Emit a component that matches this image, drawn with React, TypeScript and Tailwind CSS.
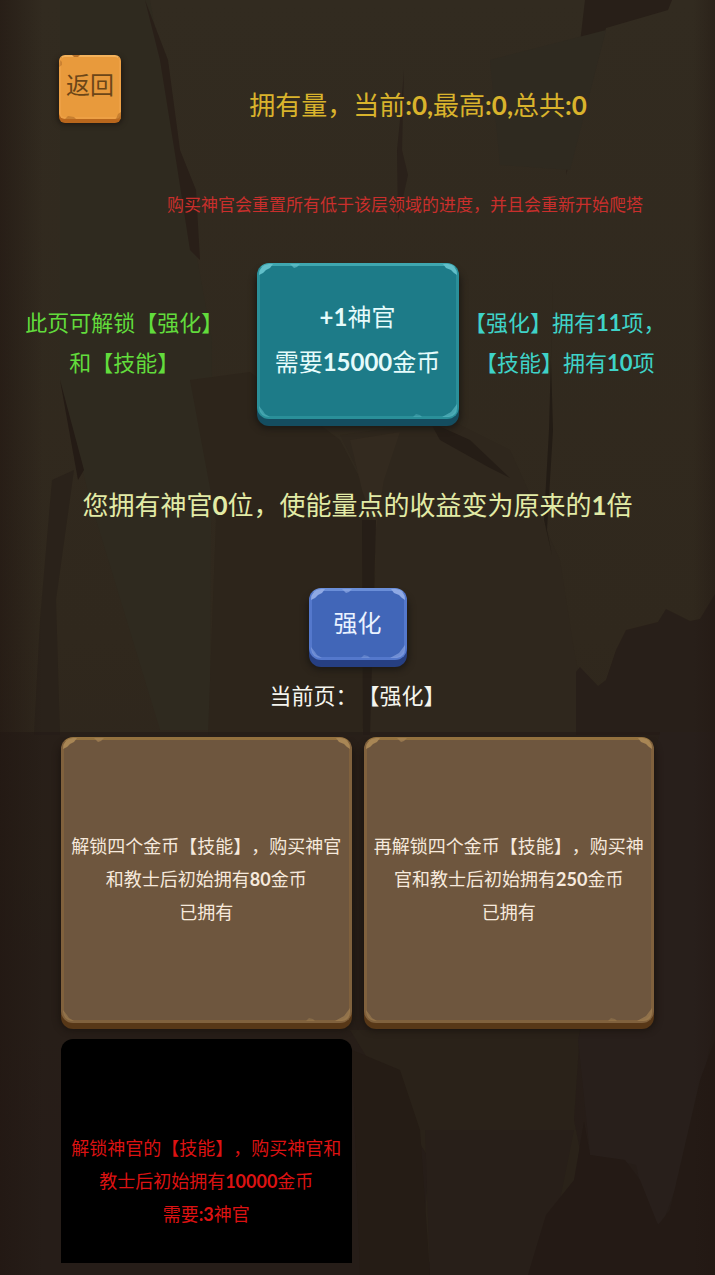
import React from 'react';

type Tone = 'teal' | 'blue' | 'brown' | 'orange';

interface Upgrade {
  id: string;
  lines: string[];
  locked: boolean;
}

const upgrades: Upgrade[] = [
  { id: 'coin-1', lines: ['解锁四个金币【技能】，购买神官', '和教士后初始拥有80金币', '已拥有'], locked: false },
  { id: 'coin-2', lines: ['再解锁四个金币【技能】，购买神', '官和教士后初始拥有250金币', '已拥有'], locked: false },
  { id: 'priest-1', lines: ['解锁神官的【技能】，购买神官和', '教士后初始拥有10000金币', '需要:3神官'], locked: true }
];

const tones: Record<Tone, { box: string; chip: string }> = {
  teal: {
    box: 'rounded-xl border-[3px] border-[#2a8f99] border-t-[#3fa7b0] bg-[#1d7b88] shadow-[0_7px_0_#144d60,0_8px_6px_2px_#1d1914]',
    chip: '#62bfc9'
  },
  blue: {
    box: 'rounded-xl border-[3px] border-[#5478cc] border-t-[#6a8ed8] bg-[#4166b8] shadow-[0_7px_0_#263f82,0_8px_6px_2px_#1d1914]',
    chip: '#8fa9e4'
  },
  brown: {
    box: 'rounded-xl border-[3px] border-[#80613d] border-t-[#93713f] bg-[#6e563e] shadow-[0_6px_0_#573717,0_6px_6px_2px_#1d1611]',
    chip: '#a88655'
  },
  orange: {
    box: 'rounded-md border-2 border-[#eda045] border-t-[#f3b25c] bg-[#e89a3c] shadow-[0_4px_0_#b8661c,0_4px_5px_2px_#211b14]',
    chip: '#b8722a'
  }
};

// Digits and latin signs are heavier than the Chinese text around them
const GameText: React.FC<{ children: string }> = ({ children }) => (
  <>
    {children.split(/([+:,0-9]+)/).map((part, i) =>
      i % 2 === 1 ? <span key={i} className="font-bold">{part}</span> : part
    )}
  </>
);

const Chips: React.FC<{ color: string }> = ({ color }) => (
  <>
    <svg className="absolute -top-[3px] -left-[3px] w-16 h-4 pointer-events-none" viewBox="0 0 64 16" aria-hidden="true">
      <path d="M2 12 Q2 2 12 1 H16 L13 5 L9 7 L6 10 Z" fill={color} />
      <path d="M33 1 H43 L40 4 L37 5 Z" fill={color} opacity="0.7" />
    </svg>
    <svg className="absolute -top-[3px] -right-[3px] w-4 h-4 pointer-events-none" viewBox="0 0 16 16" aria-hidden="true">
      <path d="M0 1 H5 Q14 2 14 12 L11 10 L8 7 L3 5 Z" fill={color} />
    </svg>
    <svg className="absolute -bottom-[3px] -left-[3px] w-4 h-4 pointer-events-none" viewBox="0 0 16 16" aria-hidden="true">
      <path d="M2 3 L6 8 L8 11 L13 14 Q3 14 2 5 Z" fill={color} opacity="0.5" />
    </svg>
    <svg className="absolute -bottom-[3px] -right-[3px] w-16 h-4 pointer-events-none" viewBox="0 0 64 16" aria-hidden="true">
      <path d="M62 1 L59 5 L56 9 L47 14 H54 Q62 13 62 5 Z" fill={color} opacity="0.6" />
      <path d="M18 14 L21 11 L25 12 L27 14 Z" fill={color} opacity="0.4" />
    </svg>
  </>
);

const OrangeChips: React.FC<{ color: string }> = ({ color }) => (
  <svg className="absolute -inset-[2px] w-[62px] h-16 pointer-events-none" viewBox="0 0 62 64" aria-hidden="true">
    <path d="M13 0 L15 2 L19 2 L21 0 Z" fill={color} />
    <path d="M0 12 L3 10 L3 7 L1 5 Z" fill={color} opacity="0.6" />
    <path d="M6 64 L9 61 L15 62 L17 64 Z" fill={color} opacity="0.7" />
    <path d="M57 64 L59 59 L62 57 V64 Z" fill={color} opacity="0.7" />
  </svg>
);

const StoneButton: React.FC<{ tone: Tone; className: string; children: React.ReactNode }> = ({ tone, className, children }) => (
  <button type="button" className={`relative ${tones[tone].box} ${className}`}>
    {tone === 'orange' ? <OrangeChips color={tones[tone].chip} /> : <Chips color={tones[tone].chip} />}
    {children}
  </button>
);

const CaveBackground: React.FC = () => (
  <svg className="absolute inset-0 w-full h-full" viewBox="0 0 715 1275" preserveAspectRatio="none" aria-hidden="true">
    <defs>
      <linearGradient id="cave" x1="0" y1="0" x2="0" y2="1">
        <stop offset="0" stopColor="#322b20" />
        <stop offset="0.5" stopColor="#30281d" />
        <stop offset="1" stopColor="#29201a" />
      </linearGradient>
      <linearGradient id="side" x1="0" y1="0" x2="1" y2="0">
        <stop offset="0" stopColor="#211611" stopOpacity="0.6" />
        <stop offset="0.06" stopColor="#211611" stopOpacity="0" />
        <stop offset="0.97" stopColor="#211611" stopOpacity="0" />
        <stop offset="1" stopColor="#211611" stopOpacity="0.4" />
      </linearGradient>
    </defs>
    <rect width="715" height="1275" fill="url(#cave)" />
    <path d="M60 0 H150 L176 150 L190 220 L212 340 L210 730 H160 L90 500 L60 380 Z" fill="#2f2a1f" />
    <path d="M145 0 L168 60 L180 150 L196 190 L200 260 L190 250 L176 160 L160 60 Z" fill="#291f18" />
    <path d="M585 0 H672 L668 10 L606 28 L590 90 L566 175 L572 110 L578 60 Z" fill="#281f18" />
    <path d="M490 60 L606 30 L570 170 L500 165 Z" fill="#2f2a20" />
    <path d="M404 70 L402 150 L408 175 L398 220 L397 150 L400 120 Z" fill="#2a211a" />
    <path d="M190 380 L250 372 L340 440 L366 490 L376 590 L362 735 H208 L216 520 Z" fill="#2d251b" />
    <path d="M340 435 L450 420 L510 450 L560 560 L574 650 L590 735 H366 L376 560 L368 490 Z" fill="#2f271d" />
    <path d="M350 440 L400 432 L384 480 L376 530 L362 490 Z" fill="#332a1f" />
    <path d="M362 520 H376 L370 735 H363 Z" fill="#261e17" />
    <path d="M553 280 L551 360 L553 430 L547 530 L552 555 L544 520 L549 430 Z" fill="#231c15" />
    <path d="M430 422 L470 440 L510 478 L490 468 L440 440 Z" fill="#251d16" />
    <path d="M60 380 L84 470 L78 480 Z" fill="#241b15" />
    <path d="M52 480 L74 470 L56 600 L60 735 H34 L40 620 Z" fill="#2a221a" />
    <path d="M715 594 L700 619 L690 621 L666 609 L658 622 L626 630 L616 650 L606 680 L598 686 L580 667 L576 672 V735 H715 Z" fill="#281f19" />
    <rect y="732" width="715" height="543" fill="#251c17" opacity="0.65" />
    <path d="M350 1030 H580 L574 1120 L590 1200 L560 1262 H420 L430 1160 Z" fill="#2a2219" />
    <path d="M400 1070 L420 1130 L430 1275 H360 L352 1050 Z" fill="#251c15" />
    <path d="M425 1130 L430 1275 H530 L560 1200 L574 1130 Z" fill="#281f19" />
    <path d="M578 1040 L660 732 H715 V1020 L690 1150 L662 1225 L648 1220 L636 1165 L590 1155 Z" fill="#281f1b" />
    <path d="M584 1122 L590 1155 L625 1160 L640 1180 L658 1225 L670 1210 L700 1080 L715 1040 V1275 H528 L546 1215 L574 1180 Z" fill="#241a15" />
    <rect width="715" height="1275" fill="url(#side)" />
  </svg>
);

const UpgradeCard: React.FC<{ upgrade: Upgrade }> = ({ upgrade }) => {
  const text = upgrade.lines.map(line => (
    <span key={line} className="block">
      <GameText>{line}</GameText>
    </span>
  ));

  if (upgrade.locked) {
    return (
      <button
        type="button"
        disabled
        className="h-[292px] rounded-xl bg-black px-2 pb-2 text-lg leading-[33px] text-[#dc1212]"
      >
        {text}
      </button>
    );
  }

  return (
    <StoneButton tone="brown" className="mb-[6px] h-[286px] px-[6px] pb-[2px] text-lg leading-[33px] text-[#f6e9dc]">
      {text}
    </StoneButton>
  );
};

const App: React.FC = () => {
  return (
    <div
      lang="zh-CN"
      className="relative h-screen overflow-hidden bg-[#2e261c] font-['Lato','Noto_Sans_CJK_SC',sans-serif] [text-spacing-trim:space-all]"
    >
      <CaveBackground />

      <main className="relative flex h-full flex-col pb-3">
        <header className="flex shrink-0 items-end pt-[55px] pl-[59px]">
          <StoneButton tone="orange" className="mb-1 h-16 w-[62px] shrink-0 pb-1 text-2xl leading-9 text-[#6b4618]">
            返回
          </StoneButton>
          <h1 className="flex-1 text-center text-[26px] leading-9 text-[#d9b32c]">
            <GameText>拥有量，当前:0,最高:0,总共:0</GameText>
          </h1>
        </header>

        <p className="mt-[70px] shrink-0 pr-[72px] text-right text-[17px] leading-6 text-[#c92f2c]">
          购买神官会重置所有低于该层领域的进度，并且会重新开始爬塔
        </p>

        <section className="mt-[46px] grid shrink-0 grid-cols-[1fr_202px_1fr] items-center text-center text-[22px] leading-10">
          <p className="pr-2 pb-1 text-[#62dc3c]">
            此页可解锁【强化】
            <br />
            和【技能】
          </p>
          <StoneButton tone="teal" className="mb-[7px] h-[156px] pb-1 text-2xl leading-[45px] text-[#e6fbfb]">
            <GameText>+1神官</GameText>
            <br />
            <GameText>需要15000金币</GameText>
          </StoneButton>
          <p className="pr-11 pb-1 text-[#3fd3c8]">
            <GameText>【强化】拥有11项，</GameText>
            <br />
            <GameText>【技能】拥有10项</GameText>
          </p>
        </section>

        <p className="mt-[61px] shrink-0 text-center text-[26px] leading-9 text-[#e2eba6]">
          <GameText>您拥有神官0位，使能量点的收益变为原来的1倍</GameText>
        </p>

        <div className="mt-[65px] flex shrink-0 flex-col items-center">
          <StoneButton tone="blue" className="h-[72px] w-[98px] pb-[2px] text-2xl leading-9 text-[#eaf2ff]">
            强化
          </StoneButton>
          <p className="mt-[18px] text-[22px] leading-9 text-[#f5f5ee]">当前页：【强化】</p>
        </div>

        <section className="mt-[23px] grid min-h-0 flex-1 auto-rows-max grid-cols-2 gap-x-3 gap-y-[10px] overflow-hidden px-[61px]">
          {upgrades.map(upgrade => (
            <UpgradeCard key={upgrade.id} upgrade={upgrade} />
          ))}
        </section>
      </main>
    </div>
  );
};

export default App;
